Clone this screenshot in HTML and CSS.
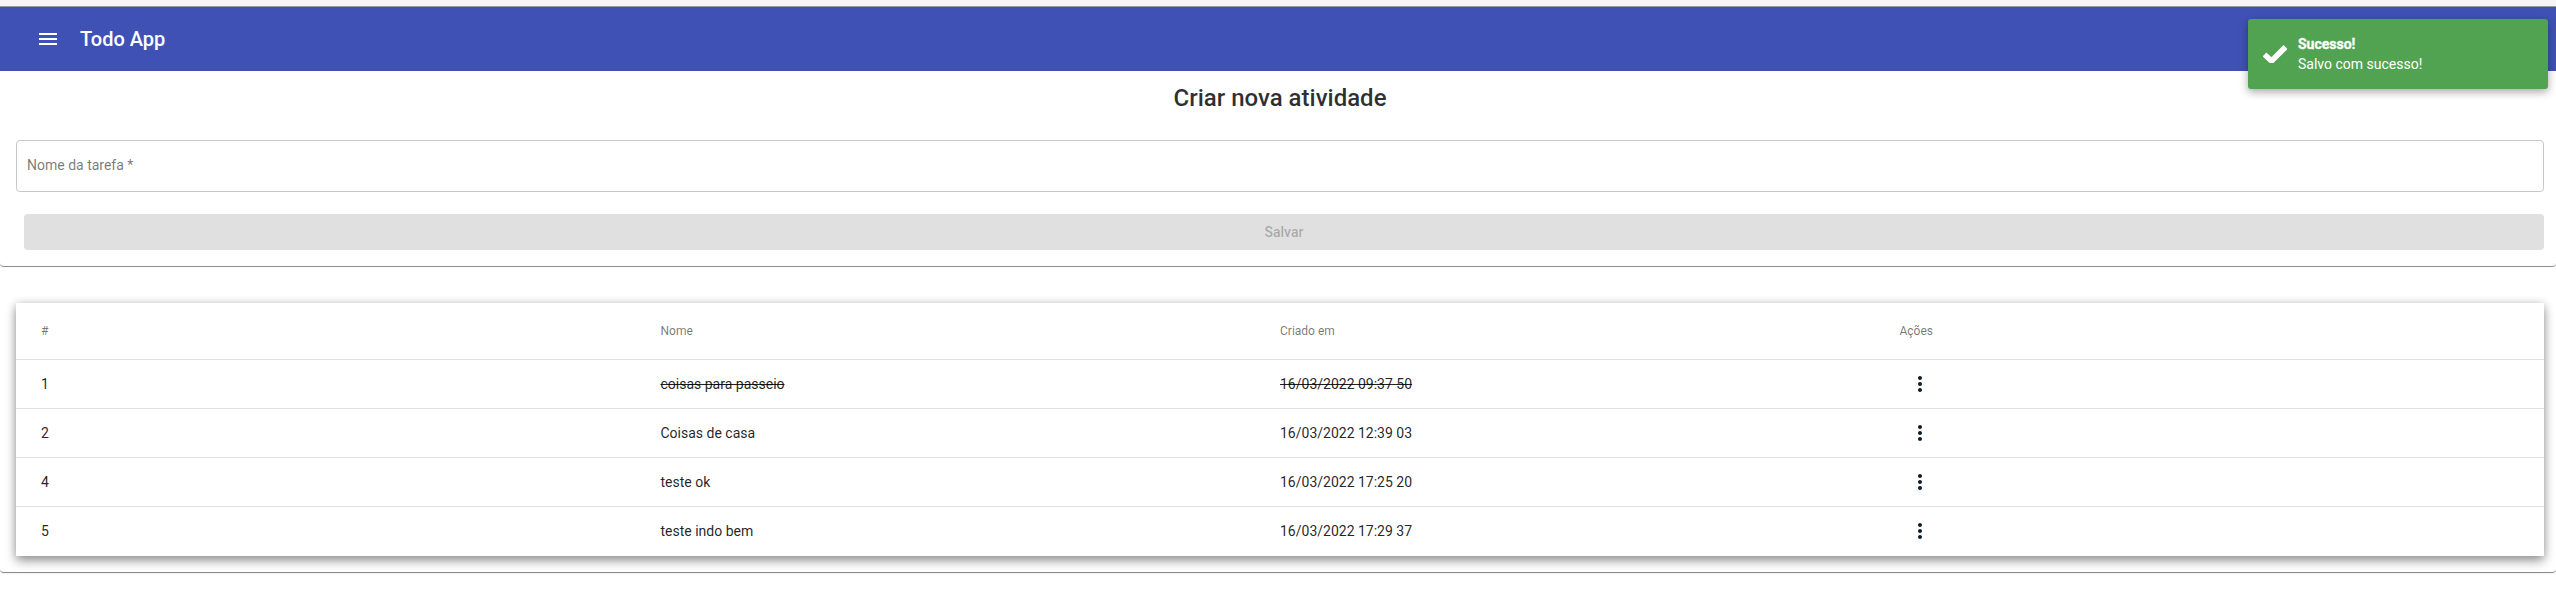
FILE: index.html
```html
<!DOCTYPE html>
<html lang="pt">
<head>
<meta charset="utf-8">
<title>Todo App</title>
<link rel="stylesheet" href="styles.css">
</head>
<body>
<div class="topstrip"></div>
<header class="appbar">
  <svg class="menu-icon" viewBox="0 0 24 24"><path d="M3 18h18v-2H3v2zm0-5h18v-2H3v2zm0-7v2h18V6H3z"/></svg>
  <span class="app-title">Todo App</span>
</header>
<main>
  <section class="paper form-paper">
    <h1 class="page-title">Criar nova atividade</h1>
    <div class="field"><span class="field-label">Nome da tarefa *</span></div>
    <button class="save" disabled>Salvar</button>
  </section>
  <section class="paper table-paper">
    <table class="tasks">
      <colgroup><col class="c1"><col class="c2"><col class="c3"><col></colgroup>
      <thead>
        <tr><th>#</th><th>Nome</th><th>Criado em</th><th>Ações</th></tr>
      </thead>
      <tbody>
        <tr class="done"><td>1</td><td><s>coisas para passeio</s></td><td><s>16/03/2022 09:37 50</s></td><td><svg class="dots" viewBox="0 0 24 24"><path d="M12 8c1.1 0 2-.9 2-2s-.9-2-2-2-2 .9-2 2 .9 2 2 2zm0 2c-1.1 0-2 .9-2 2s.9 2 2 2 2-.9 2-2-.9-2-2-2zm0 6c-1.1 0-2 .9-2 2s.9 2 2 2 2-.9 2-2-.9-2-2-2z"/></svg></td></tr>
        <tr><td>2</td><td>Coisas de casa</td><td>16/03/2022 12:39 03</td><td><svg class="dots" viewBox="0 0 24 24"><path d="M12 8c1.1 0 2-.9 2-2s-.9-2-2-2-2 .9-2 2 .9 2 2 2zm0 2c-1.1 0-2 .9-2 2s.9 2 2 2 2-.9 2-2-.9-2-2-2zm0 6c-1.1 0-2 .9-2 2s.9 2 2 2 2-.9 2-2-.9-2-2-2z"/></svg></td></tr>
        <tr><td>4</td><td>teste ok</td><td>16/03/2022 17:25 20</td><td><svg class="dots" viewBox="0 0 24 24"><path d="M12 8c1.1 0 2-.9 2-2s-.9-2-2-2-2 .9-2 2 .9 2 2 2zm0 2c-1.1 0-2 .9-2 2s.9 2 2 2 2-.9 2-2-.9-2-2-2zm0 6c-1.1 0-2 .9-2 2s.9 2 2 2 2-.9 2-2-.9-2-2-2z"/></svg></td></tr>
        <tr><td>5</td><td>teste indo bem</td><td>16/03/2022 17:29 37</td><td><svg class="dots" viewBox="0 0 24 24"><path d="M12 8c1.1 0 2-.9 2-2s-.9-2-2-2-2 .9-2 2 .9 2 2 2zm0 2c-1.1 0-2 .9-2 2s.9 2 2 2 2-.9 2-2-.9-2-2-2zm0 6c-1.1 0-2 .9-2 2s.9 2 2 2 2-.9 2-2-.9-2-2-2z"/></svg></td></tr>
      </tbody>
    </table>
  </section>
</main>
<aside class="toast">
  <svg class="check" viewBox="0 0 24 18"><path d="M1.5 9.5 8.5 16 22.5 2"/></svg>
  <div class="toast-text">
    <div class="toast-title">Sucesso!</div>
    <div class="toast-msg">Salvo com sucesso!</div>
  </div>
</aside>
</body>
</html>
```
FILE: styles.css
```css
* { box-sizing: border-box; }
html, body { margin: 0; padding: 0; background: #fff; }
body { font-family: Roboto, "Liberation Sans", sans-serif; color: rgba(0,0,0,.87); height: 605px; overflow: hidden; }
.topstrip { height: 7px; background: #f5f5f5; border-bottom: 1px solid #9a9a9a; }
.appbar { height: 64px; background: #3f51b5; color: #fff; display: flex; align-items: center; padding-left: 36px; }
.menu-icon { width: 24px; height: 24px; fill: #fff; margin-right: 20px; flex: none; }
.app-title { font-size: 20px; font-weight: 500; line-height: 1.6; }
.paper { background: #fff; border-bottom: 1px solid #8c8c8c; border-radius: 0 0 4px 4px; box-shadow: 0 1px 2px rgba(0,0,0,.06); }
.form-paper { height: 196px; padding: 0 12px 0 16px; }
.page-title { margin: 0; padding-top: 11px; height: 69px; font-size: 24px; font-weight: 500; line-height: 32px; text-align: center; color: rgba(0,0,0,.82); }
.field { height: 52px; border: 1px solid #c8c8c8; border-radius: 4px; display: flex; align-items: center; padding: 0 0 2px 10px; }
.field-label { font-size: 14px; color: rgba(0,0,0,.54); }
.save { display: block; margin: 22px 0 0 8px; width: calc(100% - 8px); height: 36px; border: 0; border-radius: 4px; background: #e0e0e0; color: rgba(0,0,0,.26); font: 500 14px Roboto, "Liberation Sans", sans-serif; }
.table-paper { height: 306px; padding: 36px 12px 0 16px; }
.tasks { width: 100%; height: 253px; table-layout: fixed; border-collapse: separate; border-spacing: 0; background: #fff; box-shadow: 0 5px 10px rgba(0,0,0,.38), 0 0 8px rgba(0,0,0,.14); font-size: 14px; }
.c1, .c2, .c3 { width: 619.5px; }
.tasks th, .tasks td { text-align: left; padding: 0 0 0 25px; border-bottom: 1px solid #e0e0e0; }
.tasks th { height: 57px; font-size: 12px; font-weight: 400; color: rgba(0,0,0,.54); }
.tasks td { height: 49px; color: rgba(0,0,0,.87); }
.tasks tbody tr:last-child td { border-bottom-color: transparent; }
.tasks s { text-decoration: line-through; }
.dots { display: block; width: 24px; height: 24px; margin-left: 8px; fill: #0b1c2c; }
.toast { position: absolute; left: 2248px; top: 19px; width: 300px; height: 70px; background: #51a351; border-radius: 3px; box-shadow: 0 3px 8px rgba(0,0,0,.35); color: #fff; display: flex; align-items: center; padding-left: 15px; }
.check { width: 24px; height: 18px; fill: none; stroke: #fff; stroke-width: 5.5; flex: none; margin-right: 11px; }
.toast-title { font-size: 14px; font-weight: 700; line-height: 20px; -webkit-text-stroke: .3px #fff; }
.toast-msg { font-size: 14px; line-height: 20px; }
```
